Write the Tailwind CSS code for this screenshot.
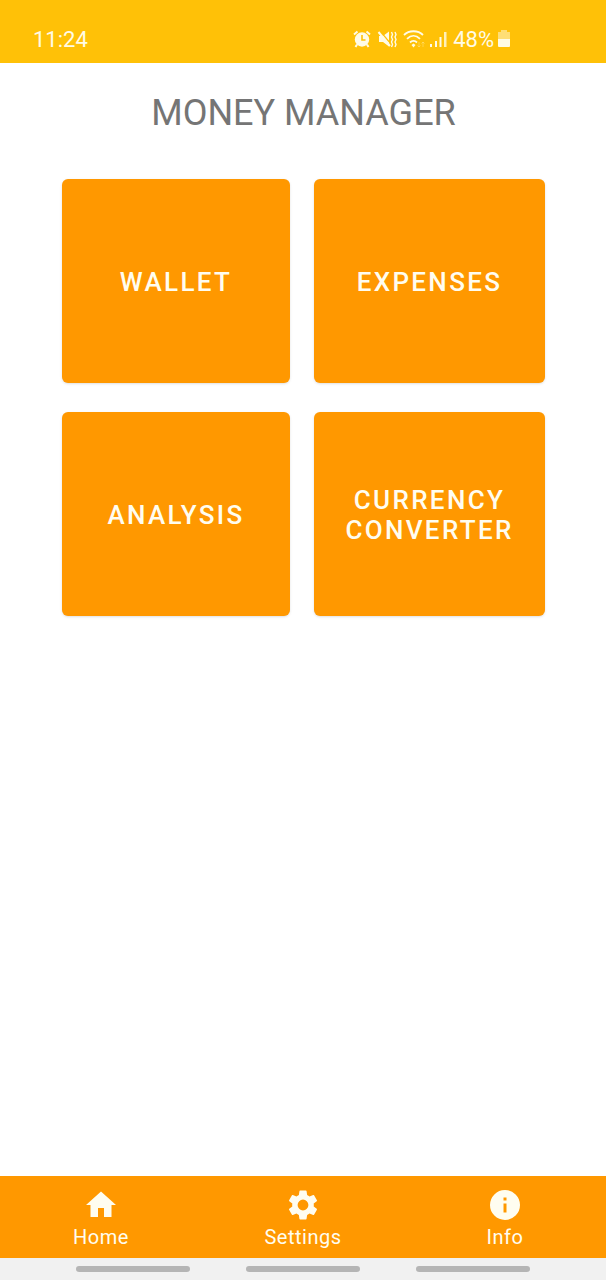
<!DOCTYPE html>
<html lang="en">
<head>
<meta charset="utf-8">
<meta name="viewport" content="width=device-width, initial-scale=1">
<title>Money Manager</title>
<script src="https://cdn.jsdelivr.net/npm/@tailwindcss/browser@4"></script>
</head>
<body class="flex min-h-screen flex-col bg-white font-[Roboto,sans-serif]">
  <!-- Status bar -->
  <header class="flex h-[63px] items-center justify-between bg-[#ffc107] pt-4 pr-24 pl-[33px] text-[22px] leading-6 text-[#fffbe6]">
    <span>11:24</span>
    <div class="flex items-center">
      <svg class="mr-1.5 h-5 w-[18px]" viewBox="0 1 18 20" fill="none" stroke="currentColor" aria-hidden="true">
        <path d="M1 5.500 4.500 2.500M17 5.500l-3.500-3" stroke-width="2"/>
        <circle cx="9" cy="10.500" r="7.200" fill="currentColor" stroke="none"/>
        <path d="m4 15.500-1.500 2.500M14 15.500l1.500 2.500" stroke-width="2"/>
        <path d="M9 6v5h3.500" stroke="#ffc107" stroke-width="1.600"/>
      </svg>
      <svg class="mr-1.5 h-5 w-5" viewBox="0 1 20 20" fill="none" stroke="currentColor" aria-hidden="true">
        <path d="M2 7h4l6-4.500v15L6 13H2z" fill="currentColor" stroke="none"/>
        <path d="m3 2 11 13" stroke="#ffc107" stroke-width="1.200"/>
        <path d="m1.500 3 11.500 14" stroke-width="2"/>
        <path d="m14.500 3 1 2.500-1 2.500 1 2.500-1 2.500 1 2.500-1 2.500M18 3l1 2.500L18 8l1 2.500-1 2.500 1 2.500-1 2.500" stroke-width="1.400"/>
      </svg>
      <svg class="mr-1 h-5 w-[23px]" viewBox="0 1 23 20" fill="none" stroke="currentColor" aria-hidden="true">
        <path d="M1 6c5-5 14-5 19 0M4 9.800c4-4 9-4 13 0M7 13.500c2-2 5-2 7 0" stroke-width="1.800"/>
        <path d="m8.500 16 2-1.500 2 1.500-2 2.500z" fill="currentColor" stroke="none"/>
        <path d="M16 13v5m-1.500-1.500L16 18l1.500-1.500M20 18v-5m-1.500 1.500L20 13l1.500 1.500" stroke-width="1" opacity=".3"/>
      </svg>
      <svg class="mr-1.5 h-5 w-[17px]" viewBox="0 0 17 20" fill="currentColor" aria-hidden="true">
        <path d="M0 14h2v3H0zM5 11h2v6H5zM9.500 7h2v10h-2z"/>
        <path d="M14 2h2.500v15H14z" opacity=".8"/>
      </svg>
      <span class="mr-1">48%</span>
      <svg class="h-5 w-3" viewBox="0 1 12 20" fill="currentColor" aria-hidden="true">
        <path d="M3 1h6v2h3v7H0V3h3z" opacity=".5"/>
        <path d="M0 10h12v7q0 1-1 1H1q-1 0-1-1z"/>
      </svg>
    </div>
  </header>

  <main class="flex-1 pt-[29px] pr-[61px] pl-[62px]">
    <h1 class="text-center text-[36px] leading-[42px] text-[#757575]">MONEY MANAGER</h1>
    <div class="mt-[45px] grid grid-cols-[228fr_231fr] gap-x-6 gap-y-[29px] text-[26px] leading-[30px] font-medium tracking-[0.09em] text-[#fffdf0]">
      <button type="button" class="h-[204px] rounded-md bg-[#ff9800] pt-0.5 shadow-sm">WALLET</button>
      <button type="button" class="h-[204px] rounded-md bg-[#ff9800] pt-0.5 shadow-sm">EXPENSES</button>
      <button type="button" class="h-[204px] rounded-md bg-[#ff9800] pt-0.5 shadow-sm">ANALYSIS</button>
      <button type="button" class="h-[204px] rounded-md bg-[#ff9800] px-6 pt-0.5 shadow-sm">CURRENCY CONVERTER</button>
    </div>
  </main>

  <!-- Bottom navigation -->
  <nav class="grid h-[82px] grid-cols-3 bg-[#ff9800] text-[20px] leading-7 tracking-wide text-[#fffdf0]">
    <a href="#home" class="flex flex-col items-center pt-[11px]">
      <svg class="h-9 w-9" viewBox="0 0 24 24" fill="currentColor" aria-hidden="true"><path d="M10 20v-6h4v6h5v-8h3L12 3 2 12h3v8z"/></svg>
      <span>Home</span>
    </a>
    <a href="#settings" class="flex flex-col items-center pt-[11px]">
      <svg class="h-9 w-9" viewBox="0 0 24 24" fill="currentColor" aria-hidden="true"><path d="M19.140 12.940c.04-.3.060-.61.060-.94s-.02-.64-.07-.94l2.030-1.580a.49.49 0 0 0 .12-.61l-1.920-3.320a.488.488 0 0 0-.59-.22l-2.390.96c-.5-.38-1.030-.7-1.620-.94l-.36-2.540a.484.484 0 0 0-.48-.41h-3.840c-.24 0-.43.17-.47.41l-.36 2.540c-.59.24-1.130.57-1.620.94l-2.390-.96c-.22-.08-.47 0-.59.22L2.740 8.870c-.12.21-.08.47.12.61l2.030 1.580c-.05.3-.09.63-.09.94s.02.64.07.94l-2.030 1.580a.49.49 0 0 0-.12.61l1.920 3.320c.12.22.37.29.59.22l2.390-.96c.5.38 1.030.7 1.620.94l.36 2.540c.05.24.24.41.48.41h3.840c.24 0 .44-.17.47-.41l.36-2.540c.59-.24 1.130-.56 1.620-.94l2.390.96c.22.08.47 0 .59-.22l1.920-3.320c.12-.22.070-.47-.12-.61zM12 15.600A3.600 3.600 0 1 1 12 8.400a3.600 3.600 0 0 1 0 7.200z"/></svg>
      <span>Settings</span>
    </a>
    <a href="#info" class="flex flex-col items-center pt-[11px]">
      <svg class="h-9 w-9" viewBox="0 0 24 24" fill="currentColor" aria-hidden="true"><path d="M12 2a10 10 0 1 0 0 20 10 10 0 0 0 0-20zm1 15h-2v-6h2zm0-8h-2V7h2z"/></svg>
      <span>Info</span>
    </a>
  </nav>

  <!-- System gesture hints -->
  <div class="flex h-[22px] items-center justify-between bg-[#f1f1f1] px-[76px]">
    <span class="h-[6px] w-[114px] rounded-full bg-[#b5b5b5]"></span>
    <span class="h-[6px] w-[114px] rounded-full bg-[#b5b5b5]"></span>
    <span class="h-[6px] w-[114px] rounded-full bg-[#b5b5b5]"></span>
  </div>
</body>
</html>
